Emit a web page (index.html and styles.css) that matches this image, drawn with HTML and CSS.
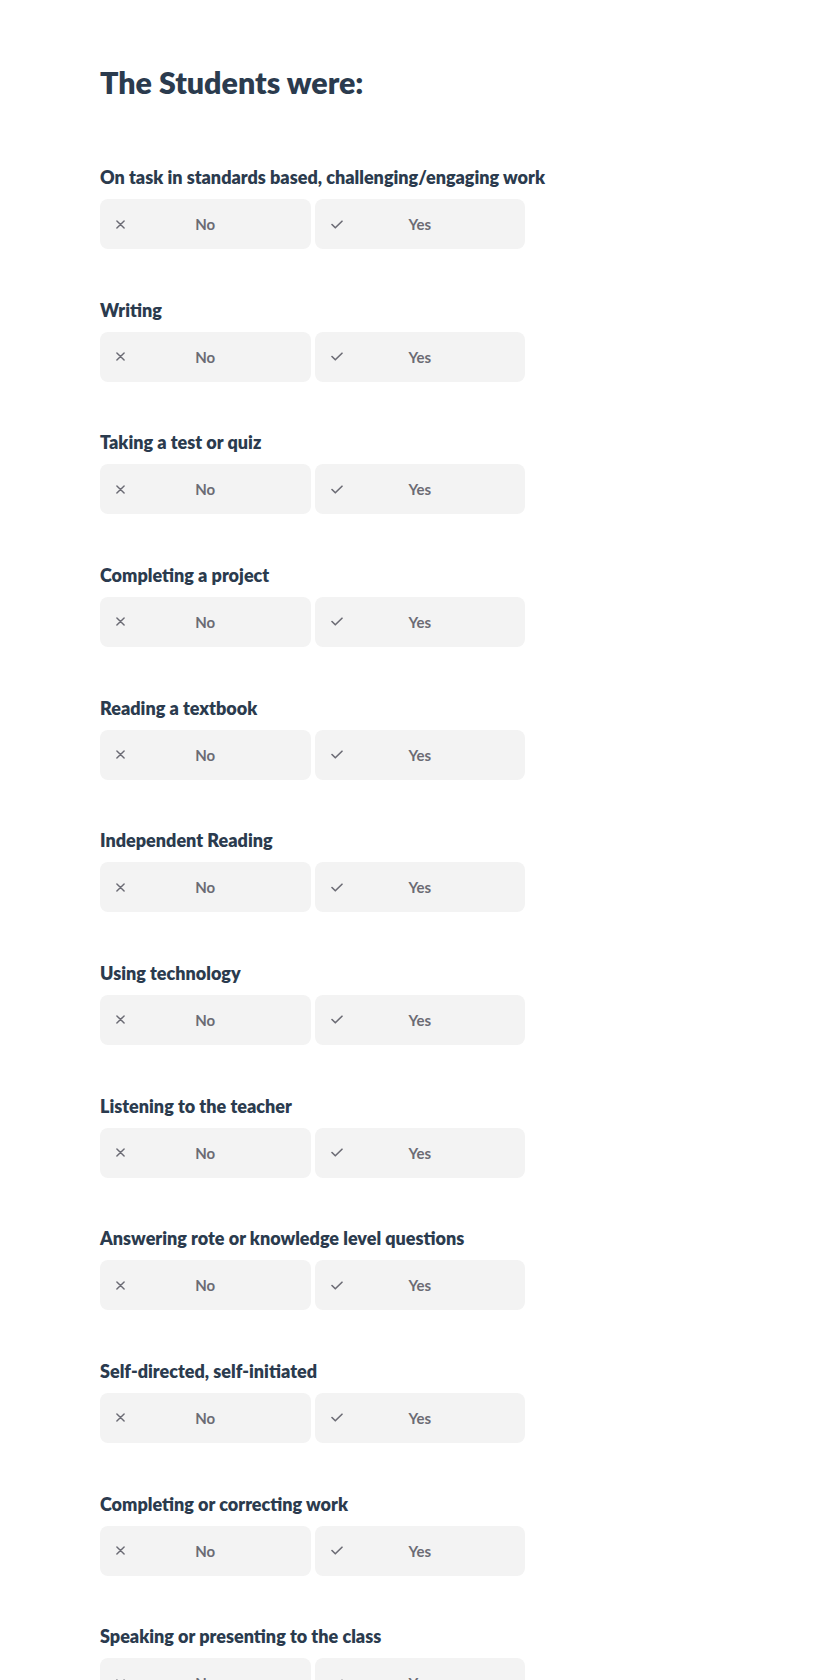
FILE: index.html
```html
<!DOCTYPE html>
<html lang="en">
<head>
<meta charset="utf-8">
<title>The Students were</title>
<link rel="stylesheet" href="styles.css">
</head>
<body>
<main class="page">
  <h1 class="title">The Students were:</h1>
  <div class="questions">
    <section class="question">
      <h2 class="label">On task in standards based, challenging/engaging work</h2>
      <div class="options">
        <button class="option"><svg class="icon" viewBox="0 0 10 10"><path d="M1 1L9 9M9 1L1 9"/></svg><span>No</span></button>
        <button class="option"><svg class="icon check" viewBox="0 0 12 9"><path d="M1 4.5L4.3 7.8L11 1.2"/></svg><span>Yes</span></button>
      </div>
    </section>
    <section class="question">
      <h2 class="label">Writing</h2>
      <div class="options">
        <button class="option"><svg class="icon" viewBox="0 0 10 10"><path d="M1 1L9 9M9 1L1 9"/></svg><span>No</span></button>
        <button class="option"><svg class="icon check" viewBox="0 0 12 9"><path d="M1 4.5L4.3 7.8L11 1.2"/></svg><span>Yes</span></button>
      </div>
    </section>
    <section class="question">
      <h2 class="label">Taking a test or quiz</h2>
      <div class="options">
        <button class="option"><svg class="icon" viewBox="0 0 10 10"><path d="M1 1L9 9M9 1L1 9"/></svg><span>No</span></button>
        <button class="option"><svg class="icon check" viewBox="0 0 12 9"><path d="M1 4.5L4.3 7.8L11 1.2"/></svg><span>Yes</span></button>
      </div>
    </section>
    <section class="question">
      <h2 class="label">Completing a project</h2>
      <div class="options">
        <button class="option"><svg class="icon" viewBox="0 0 10 10"><path d="M1 1L9 9M9 1L1 9"/></svg><span>No</span></button>
        <button class="option"><svg class="icon check" viewBox="0 0 12 9"><path d="M1 4.5L4.3 7.8L11 1.2"/></svg><span>Yes</span></button>
      </div>
    </section>
    <section class="question">
      <h2 class="label">Reading a textbook</h2>
      <div class="options">
        <button class="option"><svg class="icon" viewBox="0 0 10 10"><path d="M1 1L9 9M9 1L1 9"/></svg><span>No</span></button>
        <button class="option"><svg class="icon check" viewBox="0 0 12 9"><path d="M1 4.5L4.3 7.8L11 1.2"/></svg><span>Yes</span></button>
      </div>
    </section>
    <section class="question">
      <h2 class="label">Independent Reading</h2>
      <div class="options">
        <button class="option"><svg class="icon" viewBox="0 0 10 10"><path d="M1 1L9 9M9 1L1 9"/></svg><span>No</span></button>
        <button class="option"><svg class="icon check" viewBox="0 0 12 9"><path d="M1 4.5L4.3 7.8L11 1.2"/></svg><span>Yes</span></button>
      </div>
    </section>
    <section class="question">
      <h2 class="label">Using technology</h2>
      <div class="options">
        <button class="option"><svg class="icon" viewBox="0 0 10 10"><path d="M1 1L9 9M9 1L1 9"/></svg><span>No</span></button>
        <button class="option"><svg class="icon check" viewBox="0 0 12 9"><path d="M1 4.5L4.3 7.8L11 1.2"/></svg><span>Yes</span></button>
      </div>
    </section>
    <section class="question">
      <h2 class="label">Listening to the teacher</h2>
      <div class="options">
        <button class="option"><svg class="icon" viewBox="0 0 10 10"><path d="M1 1L9 9M9 1L1 9"/></svg><span>No</span></button>
        <button class="option"><svg class="icon check" viewBox="0 0 12 9"><path d="M1 4.5L4.3 7.8L11 1.2"/></svg><span>Yes</span></button>
      </div>
    </section>
    <section class="question">
      <h2 class="label">Answering rote or knowledge level questions</h2>
      <div class="options">
        <button class="option"><svg class="icon" viewBox="0 0 10 10"><path d="M1 1L9 9M9 1L1 9"/></svg><span>No</span></button>
        <button class="option"><svg class="icon check" viewBox="0 0 12 9"><path d="M1 4.5L4.3 7.8L11 1.2"/></svg><span>Yes</span></button>
      </div>
    </section>
    <section class="question">
      <h2 class="label">Self-directed, self-initiated</h2>
      <div class="options">
        <button class="option"><svg class="icon" viewBox="0 0 10 10"><path d="M1 1L9 9M9 1L1 9"/></svg><span>No</span></button>
        <button class="option"><svg class="icon check" viewBox="0 0 12 9"><path d="M1 4.5L4.3 7.8L11 1.2"/></svg><span>Yes</span></button>
      </div>
    </section>
    <section class="question">
      <h2 class="label">Completing or correcting work</h2>
      <div class="options">
        <button class="option"><svg class="icon" viewBox="0 0 10 10"><path d="M1 1L9 9M9 1L1 9"/></svg><span>No</span></button>
        <button class="option"><svg class="icon check" viewBox="0 0 12 9"><path d="M1 4.5L4.3 7.8L11 1.2"/></svg><span>Yes</span></button>
      </div>
    </section>
    <section class="question">
      <h2 class="label">Speaking or presenting to the class</h2>
      <div class="options">
        <button class="option"><svg class="icon" viewBox="0 0 10 10"><path d="M1 1L9 9M9 1L1 9"/></svg><span>No</span></button>
        <button class="option"><svg class="icon check" viewBox="0 0 12 9"><path d="M1 4.5L4.3 7.8L11 1.2"/></svg><span>Yes</span></button>
      </div>
    </section>
  </div>
</main>
</body>
</html>
```
FILE: styles.css
```css
html, body {
  margin: 0;
  padding: 0;
  background: #ffffff;
}

body {
  font-family: Lato, "Open Sans", "Liberation Sans", sans-serif;
  color: #2b3b4e;
}

.page {
  padding: 62px 100px 40px;
}

.title {
  margin: 0;
  font-size: 30.4px;
  line-height: 40px;
  font-weight: 800;
  color: #2b3b4e;
}

.questions {
  margin-top: 62px;
  display: flex;
  flex-direction: column;
  gap: 47.66px;
  width: 425px;
}

.label {
  margin: 0 0 8px;
  font-size: 18px;
  line-height: 27px;
  font-weight: 800;
  color: #2b3b4e;
  white-space: nowrap;
}

.options {
  display: grid;
  grid-template-columns: 1fr 1fr;
  gap: 4px;
}

.option {
  position: relative;
  display: flex;
  align-items: center;
  justify-content: center;
  height: 50px;
  border: 0;
  border-radius: 8px;
  background: #f3f3f3;
  font-family: Lato, "Open Sans", "Liberation Sans", sans-serif;
  font-size: 15px;
  font-weight: 700;
  color: #6b6b74;
  padding: 0 16px;
}

.icon {
  position: absolute;
  left: 16px;
  top: 50%;
  width: 9px;
  height: 9px;
  margin-top: -4.5px;
  fill: none;
  stroke: #6b6b74;
  stroke-width: 1.6;
  stroke-linecap: round;
  stroke-linejoin: round;
}

.icon.check {
  width: 12px;
  height: 9px;
}
```
